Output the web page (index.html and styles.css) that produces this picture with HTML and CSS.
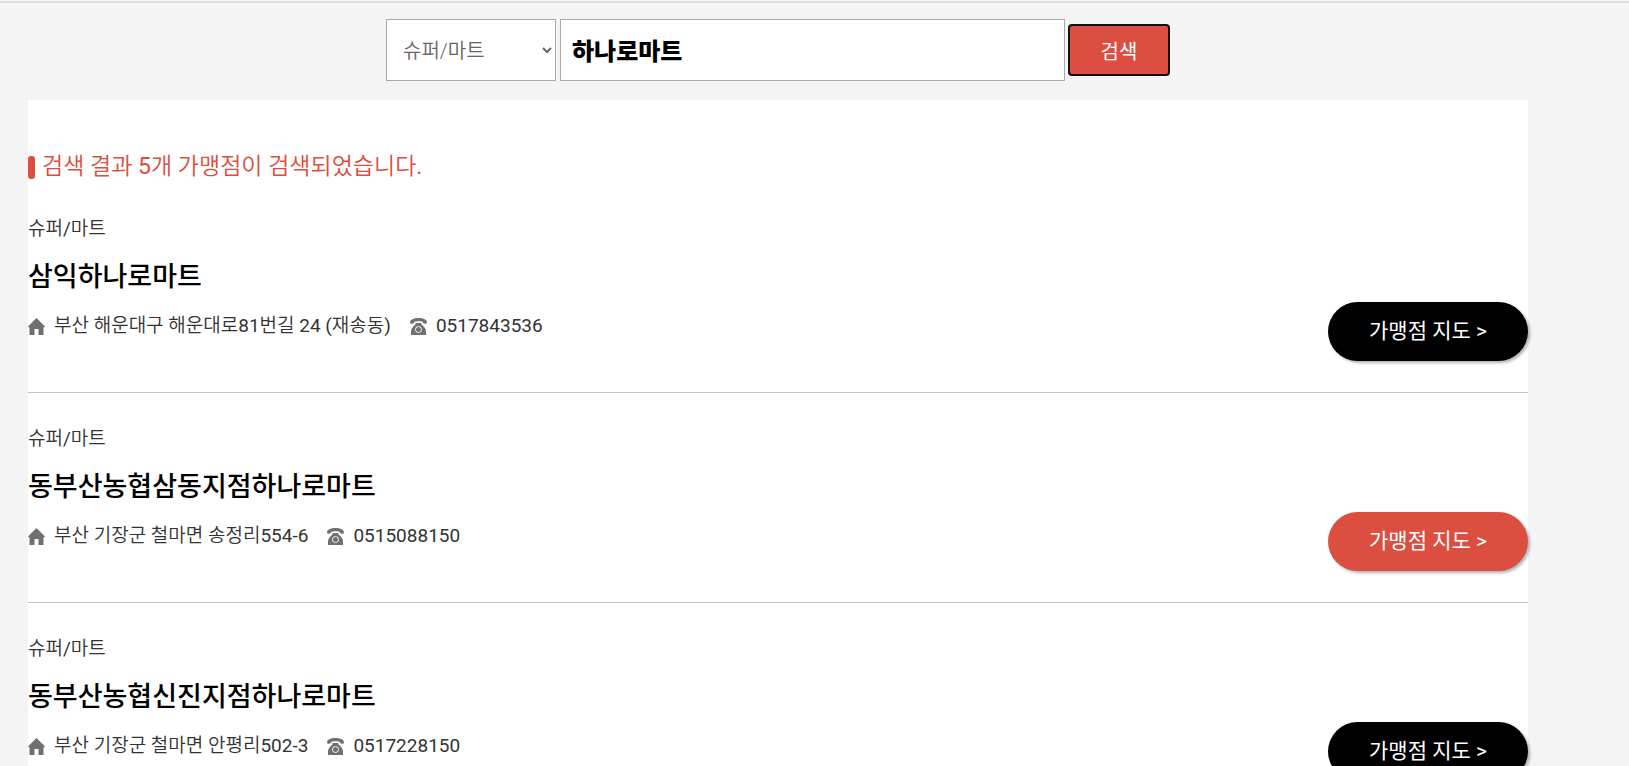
FILE: index.html
```html
<!DOCTYPE html>
<html lang="ko">
<head>
    <meta charset="UTF-8">
    <meta name="viewport" content="width=device-width, initial-scale=1.0">
    <title>가맹점 검색</title>
    <link rel="stylesheet" href="styles.css">
</head>
<body>
    <!-- 아이콘 -->
    <svg class="icon-defs" aria-hidden="true">
        <symbol id="icon-home" viewBox="0 0 17 17">
            <path d="M8.5 0 L17 8.6 L16 9.6 L15.5 9.3 V17 H10.5 V11 H6.5 V17 H1.5 V9.3 L1 9.6 L0 8.6 Z"/>
        </symbol>
        <symbol id="icon-phone" viewBox="0 0 17 17">
            <path d="M0 4.6 C0 1.6 3.6 0 8.5 0 C13.4 0 17 1.6 17 4.6 C17 5.4 16.6 5.8 15.8 5.7 L13.8 5.4 C13.1 5.3 12.8 4.8 12.8 4.1 C12.2 2.8 4.8 2.8 4.2 4.1 C4.2 4.8 3.9 5.3 3.2 5.4 L1.2 5.7 C0.4 5.8 0 5.4 0 4.6 Z"/>
            <path fill-rule="evenodd" d="M5.5 5 H11.5 V6.5 C13.5 8 16 10.5 16 13.5 V17 H1 V13.5 C1 10.5 3.5 8 5.5 6.5 Z M8.5 8.2 A3.3 3.3 0 1 0 8.5 14.8 A3.3 3.3 0 1 0 8.5 8.2 Z M8.5 9 A2.5 2.5 0 1 1 8.5 14 A2.5 2.5 0 1 1 8.5 9 Z"/>
        </symbol>
    </svg>

    <div class="container">
        <form class="search">
            <select class="search-type" name="type" aria-label="업종">
                <option>슈퍼/마트</option>
            </select>
            <input class="search-word" type="text" name="word" value="하나로마트" aria-label="검색어">
            <button class="search-btn" type="submit">검색</button>
        </form>

        <div class="result">
            <h2 class="result-title">검색 결과 5개 가맹점이 검색되었습니다.</h2>
            <ul class="store-list">
                <li class="store">
                    <div class="store-info">
                        <p class="category">슈퍼/마트</p>
                        <h3 class="name">삼익하나로마트</h3>
                        <p class="contact">
                            <svg class="icon"><use href="#icon-home"/></svg>
                            <span class="address">부산 해운대구 해운대로81번길 24 (재송동)</span>
                            <svg class="icon"><use href="#icon-phone"/></svg>
                            <span>0517843536</span>
                        </p>
                    </div>
                    <a class="map-btn" href="#">가맹점 지도 &gt;</a>
                </li>
                <li class="store">
                    <div class="store-info">
                        <p class="category">슈퍼/마트</p>
                        <h3 class="name">동부산농협삼동지점하나로마트</h3>
                        <p class="contact">
                            <svg class="icon"><use href="#icon-home"/></svg>
                            <span class="address">부산 기장군 철마면 송정리554-6</span>
                            <svg class="icon"><use href="#icon-phone"/></svg>
                            <span>0515088150</span>
                        </p>
                    </div>
                    <a class="map-btn active" href="#">가맹점 지도 &gt;</a>
                </li>
                <li class="store">
                    <div class="store-info">
                        <p class="category">슈퍼/마트</p>
                        <h3 class="name">동부산농협신진지점하나로마트</h3>
                        <p class="contact">
                            <svg class="icon"><use href="#icon-home"/></svg>
                            <span class="address">부산 기장군 철마면 안평리502-3</span>
                            <svg class="icon"><use href="#icon-phone"/></svg>
                            <span>0517228150</span>
                        </p>
                    </div>
                    <a class="map-btn" href="#">가맹점 지도 &gt;</a>
                </li>
            </ul>
        </div>
    </div>
</body>
</html>
```
FILE: styles.css
```css
* {
    box-sizing: border-box;
}
body {
    margin: 0;
    padding-top: 1px;
    background-color: #f4f4f4;
    color: #333;
    font-family: Roboto, "Noto Sans CJK KR", sans-serif;
}
h2, h3, p, ul {
    margin: 0;
    padding: 0;
}
.icon-defs {
    display: none;
}
.container {
    border-top: 2px solid #dfe1e1;
    padding: 0 101px 0 28px;
}

/* 검색 */
.search {
    display: flex;
    justify-content: center;
    align-items: center;
    padding: 16px 0 19px;
}
.search-type, .search-word {
    height: 62px;
    border: 1px solid #aaa;
    border-radius: 0;
    background-color: #fff;
    font-family: inherit;
}
.search-type {
    width: 170px;
    margin-right: 4px;
    padding: 2px 0 0 12px;
    color: #666;
    font-size: 20px;
    font-weight: 350;
}
.search-word {
    width: 505px;
    margin-right: 3px;
    padding: 0 11px 2px;
    color: #000;
    font-size: 24px;
    font-weight: 900;
}
.search-btn {
    width: 102px;
    height: 52px;
    border: 2px solid #101010;
    border-radius: 4px;
    background-color: #dc4e3f;
    color: #fff;
    font-family: inherit;
    font-size: 20px;
    cursor: pointer;
}

/* 검색 결과 */
.result {
    padding-top: 51px;
    background-color: #fff;
}
.result-title {
    display: flex;
    align-items: center;
    color: #dc4e3f;
    font-family: Roboto, "Noto Sans CJK KR DemiLight", "Noto Sans CJK KR", sans-serif;
    font-size: 23px;
    font-weight: 400;
    line-height: 32px;
}
.result-title::before {
    content: "";
    width: 7px;
    height: 23px;
    margin-right: 7px;
    border-radius: 3px;
    background-color: #dc4e3f;
}
.store-list {
    list-style: none;
}
.store {
    display: flex;
    justify-content: space-between;
    align-items: flex-end;
    padding: 32px 0 31px;
    border-bottom: 1px solid #c4c4c4;
}
.store-info {
    padding-bottom: 21px;
}
.category, .contact {
    font-family: Roboto, "Noto Sans CJK KR DemiLight", "Noto Sans CJK KR", sans-serif;
    font-size: 19px;
    line-height: 28px;
}
.name {
    margin: 14px 0 15px;
    color: #000;
    font-size: 27px;
    font-weight: 500;
    line-height: 40px;
}
.contact {
    display: flex;
    align-items: center;
}
.icon {
    width: 17px;
    height: 17px;
    margin-right: 9px;
    fill: #707070;
}
.address {
    margin-right: 19px;
}
.map-btn {
    width: 200px;
    border-radius: 30px;
    background-color: #000;
    box-shadow: 2px 2px 3px rgba(0, 0, 0, 0.3);
    color: #fff;
    font-size: 21px;
    line-height: 59px;
    text-align: center;
    text-decoration: none;
}
.map-btn.active {
    background-color: #dc4e3f;
}
```
